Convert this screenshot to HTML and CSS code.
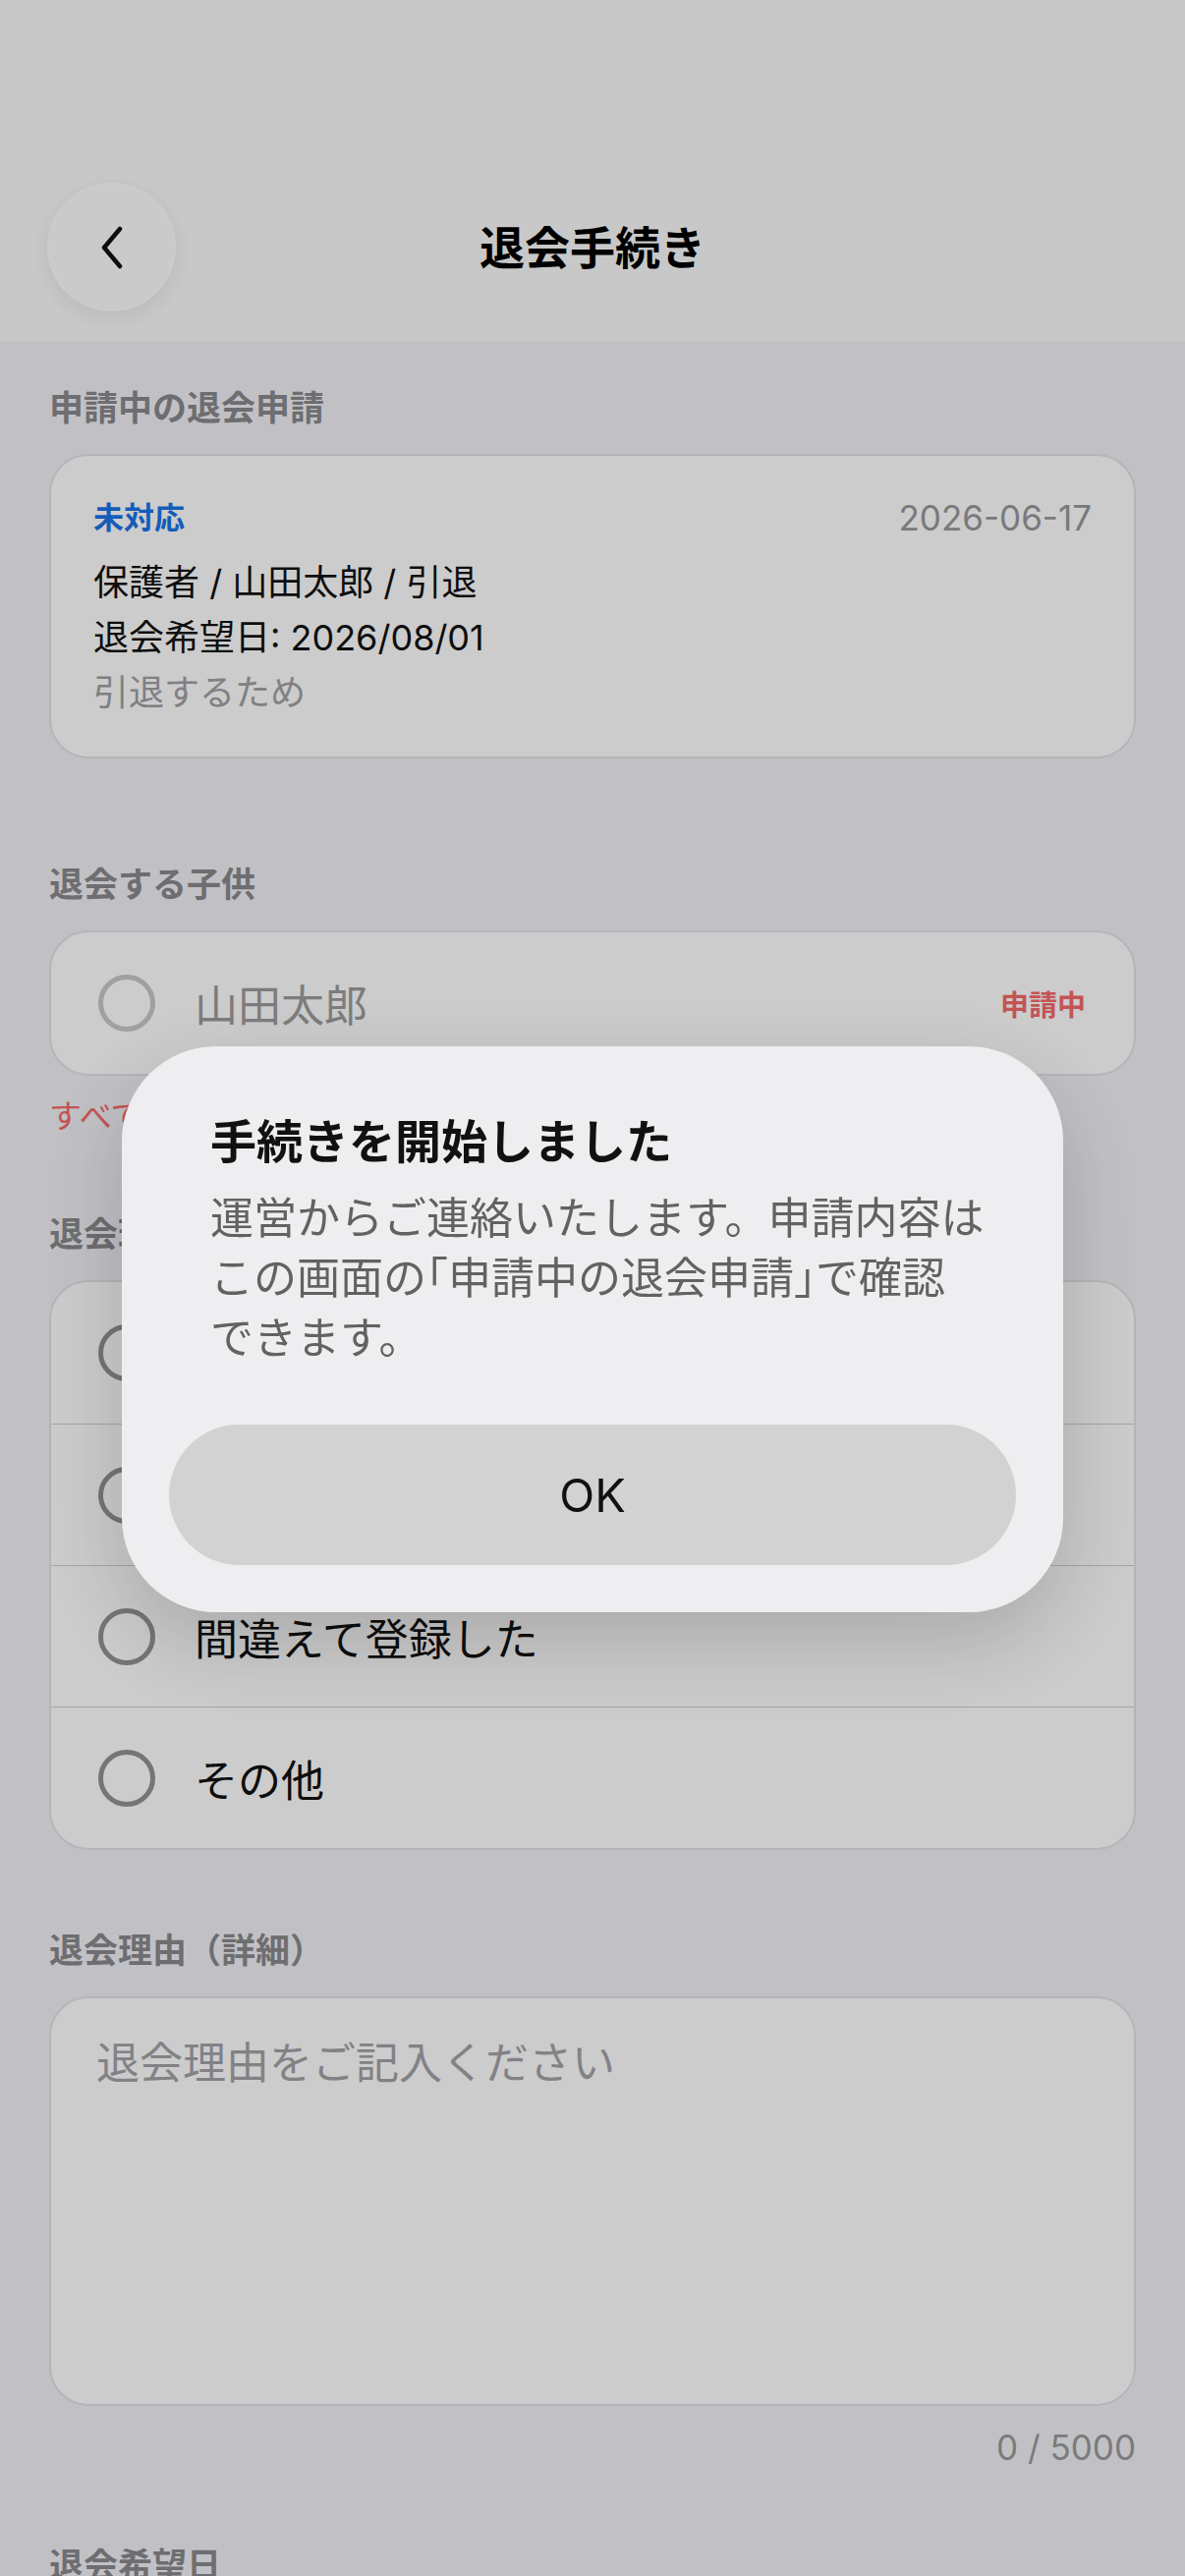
FILE: index.html
```html
<!DOCTYPE html>
<html lang="ja">
<head>
    <meta charset="UTF-8">
    <meta name="viewport" content="width=device-width, initial-scale=1.0">
    <title>退会手続き</title>

    <link rel="stylesheet" href="styles.css">
</head>
<body>
    <header class="nav">
        <button class="back-btn" aria-label="戻る">
            <svg width="30" height="44" viewBox="0 0 30 44">
                <polyline points="23,3 7,22 23,41" fill="none" stroke="#111" stroke-width="4.5" stroke-linecap="round" stroke-linejoin="round"/>
            </svg>
        </button>
        <h1>退会手続き</h1>
        <span></span>
    </header>

    <main class="content">
        <!-- 申請中のもの -->
        <section class="section section-request">
            <h2 class="section-title">申請中の退会申請</h2>
            <div class="card request-card">
                <div class="request-head">
                    <span class="status">未対応</span>
                    <span class="date">2026-06-17</span>
                </div>
                <p class="request-line">保護者 / 山田太郎 / 引退</p>
                <p class="request-line">退会希望日: 2026/08/01</p>
                <p class="request-note">引退するため</p>
            </div>
        </section>

        <section class="section section-child">
            <h2 class="section-title">退会する子供</h2>
            <div class="card">
                <div class="choice disabled">
                    <span class="radio"></span>
                    <span>山田太郎</span>
                    <span class="pending">申請中</span>
                </div>
            </div>
            <p class="note">すべての子供が申請中です</p>
        </section>

        <section class="section">
            <h2 class="section-title">退会理由</h2>
            <div class="card">
                <div class="choice"><span class="radio"></span><span>引退</span></div>
                <div class="choice"><span class="radio"></span><span>移籍</span></div>
                <div class="choice"><span class="radio"></span><span>間違えて登録した</span></div>
                <div class="choice"><span class="radio"></span><span>その他</span></div>
            </div>
        </section>

        <section class="section section-detail">
            <h2 class="section-title">退会理由（詳細）</h2>
            <textarea class="reason-input" placeholder="退会理由をご記入ください"></textarea>
            <p class="counter">0 / 5000</p>
        </section>

        <section class="section">
            <h2 class="section-title">退会希望日</h2>
            <div class="card date-card">2026/08/01</div>
        </section>
    </main>

    <!-- 完了ダイアログ -->
    <div class="backdrop">
        <div class="alert">
            <h3 class="alert-title">手続きを開始しました</h3>
            <p class="alert-text">運営からご連絡いたします。申請内容は<br>この画面の<span class="bracket">「</span>申請中の退会申請<span class="bracket">」</span>で確認<br>できます。</p>
            <button class="alert-btn">OK</button>
        </div>
    </div>
</body>
</html>
```

FILE: styles.css
```css
* {
    box-sizing: border-box;
}

body {
    margin: 0;
    font-family: "Inter", "Noto Sans CJK JP", sans-serif;
    background-color: #f2f2f7;
    color: #111;
}

.nav {
    display: grid;
    grid-template-columns: 131px 1fr 131px;
    align-items: center;
    height: 347px;
    padding: 186px 48px 30px;
    background-color: #fbfbfb;
}

.back-btn {
    display: flex;
    align-items: center;
    justify-content: center;
    width: 131px;
    height: 131px;
    padding: 0;
    border: 2px solid rgba(255, 255, 255, 0.9);
    border-radius: 50%;
    background-color: #fdfdfd;
    box-shadow: 0 6px 24px rgba(0, 0, 0, 0.08);
}

.nav h1 {
    margin: 0;
    text-align: center;
    font-size: 46px;
    line-height: 60px;
    font-weight: 700;
    color: #000;
}

.content {
    padding: 0 50px 80px;
}

.section {
    margin-top: 76px;
}

.section-request {
    margin-top: 46px;
}

.section-child {
    margin-top: 106px;
}

.section-detail {
    margin-top: 80px;
}

.section-title {
    margin: 0 0 25px;
    font-size: 35px;
    line-height: 44px;
    font-weight: 700;
    color: #8a8a8e;
}

.card {
    background-color: #fff;
    border: 2px solid #e3e3e8;
    border-radius: 40px;
    overflow: hidden;
}

.request-card {
    padding: 41px 43px 37px;
}

.request-head {
    display: flex;
    justify-content: space-between;
    align-items: center;
    line-height: 44px;
    margin-bottom: 16px;
}

.status {
    color: #1a73e8;
    font-size: 31px;
    font-weight: 700;
}

.date {
    color: #98989d;
    font-size: 35px;
}

.request-line,
.request-note {
    margin: 0;
    font-size: 36px;
    line-height: 56px;
}

.request-note {
    color: #a0a0a5;
}

.choice {
    display: flex;
    align-items: center;
    gap: 40px;
    height: 144px;
    padding: 0 49px 0 48px;
    font-size: 44px;
}

.choice + .choice {
    border-top: 1px solid #cfcfd3;
}

.radio {
    flex-shrink: 0;
    width: 58px;
    height: 58px;
    border: 5px solid #939393;
    border-radius: 50%;
}

.choice.disabled {
    color: #9c9c9c;
}

.choice.disabled .radio {
    border-color: #c8c8c8;
}

.pending {
    margin-left: auto;
    color: #f56a6a;
    font-size: 29px;
    font-weight: 700;
}

.note {
    margin: 19px 0 0;
    font-size: 33px;
    line-height: 44px;
    color: #f56a6a;
}

.reason-input {
    display: block;
    width: 100%;
    height: 417px;
    padding: 38px 46px;
    border: 2px solid #e3e3e8;
    border-radius: 40px;
    background-color: #fff;
    font-family: inherit;
    font-size: 44px;
    line-height: 56px;
    resize: none;
}

.reason-input::placeholder {
    color: #a3a3a8;
}

.counter {
    margin: 20px 0 0;
    text-align: right;
    font-size: 35px;
    line-height: 44px;
    color: #9a9a9a;
}

.date-card {
    padding: 40px 48px;
    font-size: 44px;
}

/* ダイアログ */
.backdrop {
    position: fixed;
    inset: 0;
    display: flex;
    align-items: center;
    justify-content: center;
    padding-top: 84px;
    background-color: rgba(0, 0, 0, 0.2);
}

.alert {
    width: 958px;
    padding: 67px 48px 48px;
    border-radius: 96px;
    background-color: #eeedef;
    box-shadow: 0 30px 90px rgba(0, 0, 0, 0.18);
}

.alert-title {
    margin: 0 42px;
    font-size: 47px;
    line-height: 60px;
    font-weight: 700;
    color: #111;
}

.alert-text {
    margin: 18px 0 0 42px;
    font-size: 44px;
    line-height: 61px;
    color: #626262;
    white-space: nowrap;
}

.bracket {
    display: inline-block;
    font-feature-settings: "halt";
}

.alert-btn {
    display: block;
    width: 100%;
    height: 143px;
    margin-top: 57px;
    border: none;
    border-radius: 72px;
    background-color: #d1d2d1;
    font-family: inherit;
    font-size: 47px;
    color: #111;
}
```
